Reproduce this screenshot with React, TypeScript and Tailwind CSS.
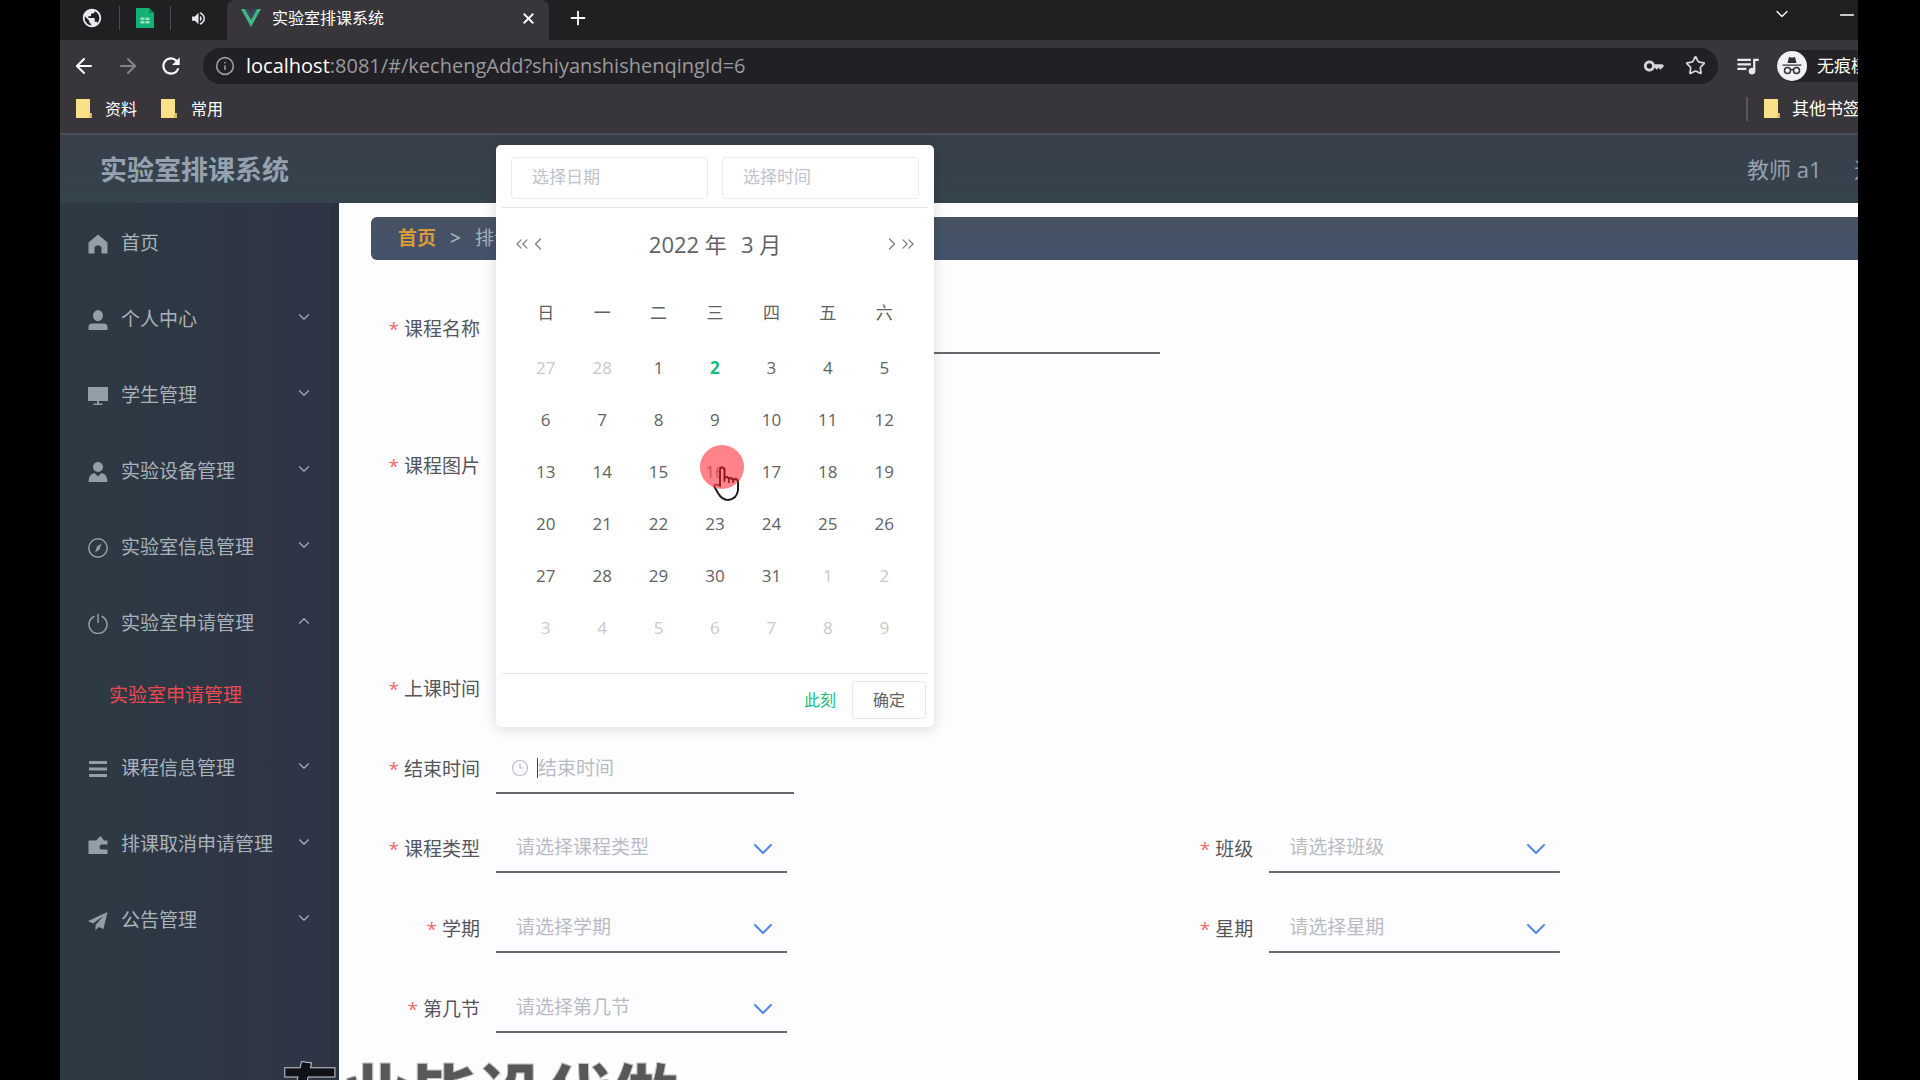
import type { ReactNode } from 'react';
import { ArrowLeft, ArrowRight, ChevronDown, ChevronLeft, ChevronRight, ChevronsLeft, ChevronsRight, ChevronUp, Clock3, Info, Minus, Plus, Star, X } from 'lucide-react';
import { MdKey, MdPublic, MdQueueMusic, MdRefresh, MdVolumeUp } from 'react-icons/md';

interface MenuItem {
  label: string;
  icon: ReactNode;
  children?: string[];
  leaf?: boolean;
}

const MENU: MenuItem[] = [
  {
    label: '首页',
    leaf: true,
    icon: <path d="M10 0.5 L19.5 8.5 V19.5 H13.5 V13 Q10 9.5 6.5 13 V19.5 H0.5 V8.5 Z" />,
  },
  {
    label: '个人中心',
    icon: <path d="M10 0a5 5.6 0 0 1 5 5.6a5 5.6 0 0 1-10 0A5 5.6 0 0 1 10 0ZM0.5 20v-3q0-3.5 4-3.5h11q4 0 4 3.5v3Z" />,
  },
  {
    label: '学生管理',
    icon: <path d="M0 1h20v14H0ZM9 15h2v2.5h3.5V19h-9v-1.5H9Z" />,
  },
  {
    label: '实验设备管理',
    icon: <path d="M10 0a5 5 0 0 1 5 5a5 5 0 0 1-10 0A5 5 0 0 1 10 0ZM0.5 20q0-8 6-9l3.5 3.5l3.5-3.5q6 1 6 9Z" />,
  },
  {
    label: '实验室信息管理',
    icon: (
      <>
        <circle cx="10" cy="10" r="9.2" fill="none" stroke="currentColor" strokeWidth="1.5" />
        <path d="M13.5 5.5 L11.5 11.5 L7 14.5 L8.8 8.8 Z" />
      </>
    ),
  },
  {
    label: '实验室申请管理',
    children: ['实验室申请管理'],
    icon: <path d="M6.5 2.2a9 9 0 1 0 7 0M10 0v9" fill="none" stroke="currentColor" strokeWidth="1.5" />,
  },
  {
    label: '课程信息管理',
    icon: <path d="M1 3.5h18M1 10h18M1 16.5h18M6 2v3M14 8.5v3M7 15v3" fill="none" stroke="currentColor" strokeWidth="3" />,
  },
  {
    label: '排课取消申请管理',
    icon: <path d="M0.5 5.5H8L12.5 1L16 5.5H19.5V9.5H14a2.5 2.5 0 0 0 0 5H19.5V19H0.5Z" />,
  },
  {
    label: '公告管理',
    icon: <path d="M19.5 1 L0 10 L5 12.5 L15.5 5 L7.5 14 V19.5 L10.5 16 L15.5 18 Z" />,
  },
];

const WEEKDAYS = ['日', '一', '二', '三', '四', '五', '六'];

// March 2022 starts on a Tuesday
const WEEKS = Array.from({ length: 6 }, (_, week) =>
  Array.from({ length: 7 }, (_, day) => {
    const n = week * 7 + day - 1;
    if (n < 1) return { day: n + 28, other: true };
    if (n > 31) return { day: n - 31, other: true };
    return { day: n, other: false };
  })
);

function Folder() {
  return (
    <svg viewBox="0 0 17 20" className="h-5 w-[17px] shrink-0">
      <path d="M1 0h14v14h2v5H1Z" fill="#fbe08a" />
      <path d="M15 14h2v5h-3Z" fill="#d9b95c" />
    </svg>
  );
}

function BrowserChrome() {
  return (
    <div className="border-b-2 border-[#4a4d57] bg-[#38363b] text-white">
      <div className="flex h-10 items-start bg-[#202022]">
        <div className="flex h-9 shrink-0 items-center pr-5 text-[#e8eaed]">
          <span className="flex w-[59px] justify-center pl-1"><MdPublic size={22} /></span>
          <span className="flex h-6 w-[52px] items-center justify-center border-x border-[#4b4c4f]">
            <svg viewBox="0 0 18 20" className="h-5 w-[18px]">
              <path d="M0 0h13l5 5v15H0Z" fill="#13b176" />
              <path d="M13 0v5h5Z" fill="#0c8858" />
              <path d="M4 9h10v7H4ZM4 12.5h10M9 9v7" fill="#9be0c3" stroke="#13b176" />
            </svg>
          </span>
          <span className="flex w-9 justify-end"><MdVolumeUp size={17} /></span>
        </div>
        <div className="flex h-10 w-[322px] shrink-0 items-center rounded-t-lg bg-[#38363b] pr-3 pb-1 pl-[14px]">
          <svg viewBox="0 0 20 18" className="h-[18px] w-5">
            <path d="M0 0h4l6 10.500 6-10.500h4L10 18Z" fill="#41b883" />
            <path d="M4 0h3.700L10 4l2.300-4H16L10 10.500Z" fill="#34495e" />
          </svg>
          <span className="ml-[11px] flex-1 text-base">实验室排课系统</span>
          <button aria-label="关闭标签页"><X size={17} strokeWidth={2.500} /></button>
        </div>
        <button aria-label="新标签页" className="mt-[7px] ml-[18px]"><Plus size={22} /></button>
        <div className="flex-1" />
        <button aria-label="搜索标签页" className="mt-1 mr-11"><ChevronDown size={20} strokeWidth={1.500} /></button>
        <button aria-label="最小化" className="mt-1 mr-0"><Minus size={22} strokeWidth={1.500} /></button>
      </div>

      <div className="flex h-[51px] items-center pl-3">
        <button aria-label="后退" className="mr-5"><ArrowLeft size={24} /></button>
        <button aria-label="前进" className="mr-[18px] text-[#858588]"><ArrowRight size={24} /></button>
        <button aria-label="重新加载" className="mr-[19px]"><MdRefresh size={26} /></button>
        <div className="flex h-9 flex-1 items-center rounded-full bg-[#212024] pr-3 pl-3">
          <Info size={20} className="text-[#9a9a9e]" />
          <span className="ml-[11px] flex-1 text-xl text-[#9a9a9e]">
            <span className="text-white">localhost</span>:8081/#/kechengAdd?shiyanshishenqingId=6
          </span>
          <MdKey size={22} className="mr-5 text-[#d6d6d8]" />
          <Star size={21} className="text-[#d6d6d8]" />
        </div>
        <MdQueueMusic size={27} className="ml-4 text-[#e8eaed]" />
        <div className="ml-4 flex h-8 w-[81px] items-center rounded-l-full bg-[#242226] whitespace-nowrap">
          <svg viewBox="0 0 30 30" className="mr-[10px] h-[30px] w-[30px] shrink-0">
            <circle cx="15" cy="15" r="15" fill="#f1f1f4" />
            <path d="M10.500 12l1.500-6q3 1.200 6 0l1.500 6ZM5.500 13.500h19v1.300h-19Z" fill="#303136" />
            <g fill="none" stroke="#303136" strokeWidth="1.500">
              <circle cx="10.500" cy="19.500" r="3" />
              <circle cx="19.500" cy="19.500" r="3" />
              <path d="M13.500 19q1.500-1 3 0" />
            </g>
          </svg>
          <span className="text-[17px]">无痕模式</span>
        </div>
      </div>

      <div className="flex h-[42px] items-center gap-[13px] pb-[6px] pl-[15px] text-base">
        <a href="#ziliao" className="mr-[10px] flex items-center gap-[13px]"><Folder />资料</a>
        <a href="#changyong" className="flex items-center gap-[14px]"><Folder />常用</a>
        <div className="flex-1" />
        <a href="#qita" className="flex h-6 w-[112px] items-center gap-3 border-l-2 border-[#57565b] pl-[15px] text-[17px] whitespace-nowrap">
          <Folder />其他书签
        </a>
      </div>
    </div>
  );
}

function Sidebar() {
  return (
    <nav className="w-[279px] shrink-0 border-r-[9px] border-[#29333f] bg-gradient-to-r from-[#2d3a42] to-[#2f3446] pt-[2px] text-[19px] text-[#a9b2bb]">
      {MENU.map((item) => (
        <div key={item.label}>
          <a href="#menu" className="flex h-[76px] items-center pr-[17px] pl-7">
            <svg viewBox="0 0 20 20" fill="currentColor" className="mt-[2px] mr-[13px] h-5 w-5 shrink-0 text-[#929fa6]">{item.icon}</svg>
            <span className="flex-1 whitespace-nowrap">{item.label}</span>
            {!item.leaf && (item.children
              ? <ChevronUp size={18} strokeWidth={1.500} className="-mt-1" />
              : <ChevronDown size={18} strokeWidth={1.500} className="-mt-1" />)}
          </a>
          {item.children?.map((child) => (
            <a key={child} href="#apply" className="flex h-[69px] items-center pl-[49px] text-[#f0484f]">{child}</a>
          ))}
        </div>
      ))}
    </nav>
  );
}

function DatePicker() {
  return (
    <div className="absolute bottom-full left-0 z-20 mb-[17px] h-[582px] w-[438px] rounded-[5px] bg-white text-[#606266] shadow-[0_2px_14px_rgba(0,0,0,0.14)]">
      <div className="mx-[6px] flex h-[63px] gap-[14px] border-b border-[#e4e7ed] px-[9px] pt-3">
        <input aria-label="选择日期" placeholder="选择日期" className="h-[42px] w-full min-w-0 rounded border border-[#e8eaf0] pb-1 pl-5 text-[17px] outline-none placeholder:text-[#bfc3cb]" />
        <input aria-label="选择时间" placeholder="选择时间" className="h-[42px] w-full min-w-0 rounded border border-[#e8eaf0] pb-1 pl-5 text-[17px] outline-none placeholder:text-[#bfc3cb]" />
      </div>
      <div className="flex h-[72px] items-center px-4 text-[#7a7d82]">
        <button aria-label="前一年"><ChevronsLeft size={20} strokeWidth={1.500} /></button>
        <button aria-label="上个月" className="-ml-1"><ChevronLeft size={20} strokeWidth={1.500} /></button>
        <div className="flex flex-1 justify-center gap-[14px] text-[22px] text-[#606266]">
          <span>2022 年</span>
          <span>3 月</span>
        </div>
        <button aria-label="下个月" className="-mr-1"><ChevronRight size={20} strokeWidth={1.500} /></button>
        <button aria-label="后一年"><ChevronsRight size={20} strokeWidth={1.500} /></button>
      </div>
      <table className="mx-auto w-[395px] table-fixed text-center text-[17px]">
        <thead>
          <tr className="h-[62px]">
            {WEEKDAYS.map((d) => <th key={d} scope="col" className="pt-1 font-normal">{d}</th>)}
          </tr>
        </thead>
        <tbody>
          {WEEKS.map((week, i) => (
            <tr key={i} className="h-[52px]">
              {week.map(({ day, other }) => (
                <td key={day} className="p-0">
                  {!other && day === 2 ? (
                    <span className="font-bold text-[#13bd80]">{day}</span>
                  ) : (
                    <span className={other ? 'text-[#c6c8cf]' : ''}>{day}</span>
                  )}
                  {!other && day === 16 && <Pointer />}
                </td>
              ))}
            </tr>
          ))}
        </tbody>
      </table>
      <div className="absolute inset-x-[6px] bottom-0 flex h-[54px] items-start justify-end gap-4 border-t border-[#e4e7ed] pt-[7px] pr-[2px] text-base">
        <button className="h-[38px] text-[#13bd80]">此刻</button>
        <button className="h-[38px] w-[74px] rounded border border-[#e4e7ed]">确定</button>
      </div>
    </div>
  );
}

// click highlight with the hand cursor on top of it
function Pointer() {
  return (
    <svg viewBox="0 0 44 56" className="pointer-events-none absolute top-[300px] left-[204px] h-14 w-11">
      <path d="M20 24q2.500-3 4.500 0v9q2-2 4.300.3q2-1.500 4.200.7q3-1.500 5 1v10q-1 9-10 10q-6 0-10-7l-4-7q1-3 6 0Z" fill="#fff" stroke="#1c1c1c" strokeWidth="2" />
      <circle cx="22" cy="22" r="22" fill="#ff4850" fillOpacity="0.680" />
      <path d="M20 41V24q2.500-3 4.500 0v13v-4q2-2 4.300.3V38v-4q2-1.500 4.200.7V38v-3q3-1.500 5 1" fill="none" stroke="#8b1720" strokeWidth="1.500" />
    </svg>
  );
}

function Field({ id, label, className = '', children }: { id: string; label: string; className?: string; children?: ReactNode }) {
  return (
    <div className={`flex items-start text-[19px] ${className}`}>
      <label htmlFor={id} className="mr-4 w-[109px] shrink-0 text-right leading-[50px] whitespace-nowrap text-[#54565b]">
        <span className="mr-[5px] text-[#f56c6c]">*</span>{label}
      </label>
      {children}
    </div>
  );
}

function SelectField({ id, label }: { id: string; label: string }) {
  return (
    <Field id={id} label={label}>
      <div className="relative">
        <select id={id} defaultValue="" className="h-[49px] w-[291px] appearance-none border-b-2 border-[#66676c] bg-transparent pl-5 text-[#b9bbc2] outline-none">
          <option value="">请选择{label}</option>
        </select>
        <ChevronDown size={32} strokeWidth={1.500} className="pointer-events-none absolute top-[9px] right-2 text-[#4f86e8]" />
      </div>
    </Field>
  );
}

function TimeField({ id, label, children }: { id: string; label: string; children?: ReactNode }) {
  return (
    <Field id={id} label={label}>
      <div className="relative flex h-[50px] w-[298px] items-center border-b-2 border-[#66676c] pl-[15px]">
        <Clock3 size={18} strokeWidth={1.500} className="shrink-0 text-[#b9bbc2]" />
        {children}
      </div>
    </Field>
  );
}

const inputClass = 'w-full text-[19px] leading-7 outline-none placeholder:text-[#b9bbc2]';

export default function App() {
  return (
    <div className="relative min-h-screen overflow-hidden bg-black pr-[62px] pl-[60px] font-['Open_Sans','Noto_Sans_CJK_SC',sans-serif]">
      <div className="flex min-h-screen flex-col overflow-hidden">
        <BrowserChrome />

        <header className="flex h-[68px] items-center bg-gradient-to-b from-[#383f4a] to-[#34434c] pl-10 text-[22px] whitespace-nowrap text-[#96a1ac]">
          <h1 className="flex-1 pt-[2px] text-[27px] font-bold text-[#94a1ae]">实验室排课系统</h1>
          <span className="w-[107px]">教师 a1</span>
          <a href="#logout" className="w-1">退出登录</a>
        </header>

        <div className="flex flex-1">
          <Sidebar />
          <main className="min-w-0 flex-1 bg-[#fdfdff] pt-[14px] pb-[46px] pl-8">
            <div className="flex h-[43px] items-center gap-[14px] rounded-l-md bg-gradient-to-b from-[#475362] to-[#43516a] pl-[27px] text-[19px] text-[#a8b0ba]">
              <a href="#home" className="font-bold text-[#d99a3c]">首页</a>
              <span className="font-semibold">&gt;</span>
              <span>排课</span>
            </div>

            <form className="mt-11">
              <Field id="name" label="课程名称" className="h-[137px]">
                <input id="name" className="h-[50px] w-[664px] border-b-2 border-[#66676c] outline-none" />
              </Field>
              <Field id="image" label="课程图片" className="h-[223px]">
                <input id="image" type="file" className="hidden" />
              </Field>
              <div className="grid grid-cols-[52%_48%] gap-y-[30px]">
                <div className="col-span-2">
                  <TimeField id="start" label="上课时间">
                    <input id="start" className={`${inputClass} ml-3`} />
                  </TimeField>
                </div>
                <div className="col-span-2">
                  <TimeField id="end" label="结束时间">
                    <span className="ml-2 h-5 w-px shrink-0 bg-[#444]" />
                    <input id="end" placeholder="结束时间" className={inputClass} />
                    <DatePicker />
                  </TimeField>
                </div>
                <SelectField id="type" label="课程类型" />
                <SelectField id="class" label="班级" />
                <SelectField id="term" label="学期" />
                <SelectField id="weekday" label="星期" />
                <SelectField id="period" label="第几节" />
              </div>
            </form>
          </main>
        </div>
      </div>

      <div className="pointer-events-none absolute -bottom-12 left-[276px] z-30 text-[67px] leading-[67px] font-black whitespace-nowrap text-black/65 [-webkit-text-stroke:1px_#c4c4c8]">
        专业毕设代做
      </div>
    </div>
  );
}
